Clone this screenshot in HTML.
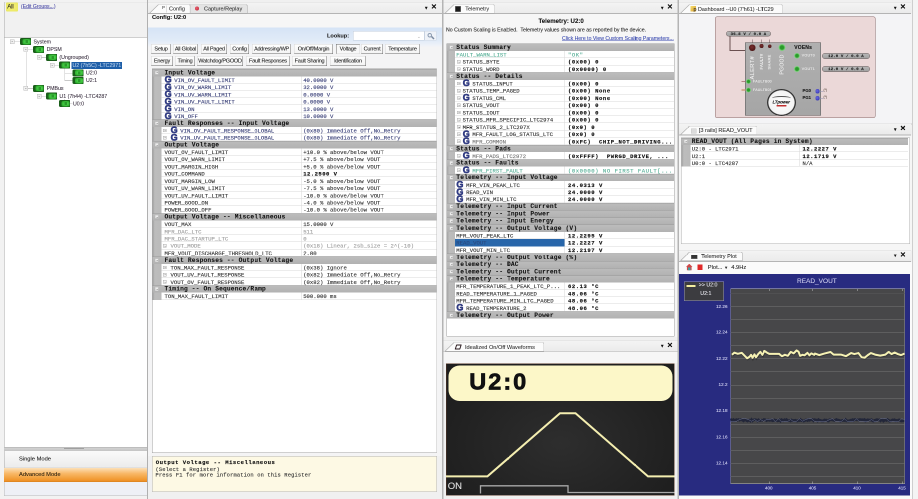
<!DOCTYPE html>
<html><head><meta charset="utf-8"><style>
*{margin:0;padding:0;box-sizing:border-box}
html,body{width:918px;height:499px;overflow:hidden;background:#f0f0f0}
#root{position:absolute;left:0;top:0;width:1836px;height:998px;will-change:transform;transform:scale(0.5);transform-origin:0 0;background:#eeeeee;font-family:"Liberation Sans",sans-serif;color:#000}
#root div,#root svg{position:absolute}
.t{white-space:nowrap;font-size:11px;line-height:14px}
.m{white-space:nowrap;font-family:"Liberation Mono",monospace;font-size:11px;line-height:14px;-webkit-text-stroke:0.25px currentColor}
.t{-webkit-text-stroke:0.15px currentColor}
.g{font-family:"Liberation Sans",sans-serif;font-weight:bold;color:#34408c;font-size:18px;line-height:15px;white-space:nowrap;-webkit-text-stroke:1.1px #2a3478}
</style></head>
<body><div id="root">
<div style="left:0px;top:0px;width:296px;height:998px;background:#f2f2f2;"></div>
<div style="left:8px;top:4px;width:288px;height:70px;background:#f1f1f1;border-left:1px solid #a8a8a8;border-top:1px solid #e4e4e4;"></div>
<div style="left:12px;top:5px;width:24px;height:18px;background:radial-gradient(ellipse at 50% 50%,#f8f078,#e8e860);border-radius:2px;"></div>
<div class="t" style="left:14.6px;top:6px;font-size:12px;color:#222;letter-spacing:-0.3px;">All</div>
<div class="t" style="left:42px;top:5.6px;color:#4a4aa8;text-decoration:underline;font-size:10.2px;">(Edit Groups...)</div>
<div style="left:8px;top:74px;width:288px;height:821px;background:#fff;border:1px solid #a8a8a8;border-top:1.5px solid #a0a0a0;"></div>
<div style="left:52px;top:104px;width:1.2px;height:72px;background:#c8c8c8;"></div>
<div style="left:129px;top:137px;width:1.2px;height:24px;background:#c8c8c8;"></div>
<div style="left:129px;top:160.4px;width:16px;height:1.2px;background:#c8c8c8;"></div>
<div style="left:129px;top:145.6px;width:16px;height:1.2px;background:#c8c8c8;"></div>
<div style="left:129px;top:198px;width:1.2px;height:9px;background:#c8c8c8;"></div>
<div style="left:129px;top:207px;width:16px;height:1.2px;background:#c8c8c8;"></div>
<div style="left:20.4px;top:78.8px;width:9px;height:9px;border:1px solid #bcbcbc;background:#f0f0f0;"><div style="left:2px;top:3px;width:3px;height:1px;background:#888"></div></div>
<div style="left:29.4px;top:83.2px;width:10.2px;height:1.2px;background:#c8c8c8;"></div>
<div style="left:39.6px;top:76.4px;width:22px;height:14px;background:#1a5e1a;border-radius:3px 1px 1px 3px;"><div style="left:5px;top:1.5px;width:16px;height:11px;background:radial-gradient(ellipse at 55% 50%,#5ae05a,#30b030 70%,#1f801f);border-radius:3px"></div><div style="left:11px;top:4px;width:5px;height:6px;background:#2a9a2a;border-radius:1px"></div></div>
<div class="t" style="left:67px;top:75.8px;font-size:10.5px;color:#3a3040;">System</div>
<div style="left:47.2px;top:94.4px;width:9px;height:9px;border:1px solid #bcbcbc;background:#f0f0f0;"><div style="left:2px;top:3px;width:3px;height:1px;background:#888"></div></div>
<div style="left:56.2px;top:98.8px;width:9.4px;height:1.2px;background:#c8c8c8;"></div>
<div style="left:65.6px;top:92px;width:22px;height:14px;background:#1a5e1a;border-radius:3px 1px 1px 3px;"><div style="left:5px;top:1.5px;width:16px;height:11px;background:radial-gradient(ellipse at 55% 50%,#5ae05a,#30b030 70%,#1f801f);border-radius:3px"></div><div style="left:11px;top:4px;width:5px;height:6px;background:#2a9a2a;border-radius:1px"></div></div>
<div class="t" style="left:93.2px;top:91.4px;font-size:10.5px;color:#3a3040;">DPSM</div>
<div style="left:74px;top:110px;width:9px;height:9px;border:1px solid #bcbcbc;background:#f0f0f0;"><div style="left:2px;top:3px;width:3px;height:1px;background:#888"></div></div>
<div style="left:83px;top:114.4px;width:9px;height:1.2px;background:#c8c8c8;"></div>
<div style="left:92px;top:107.6px;width:22px;height:14px;background:#1a5e1a;border-radius:3px 1px 1px 3px;"><div style="left:5px;top:1.5px;width:16px;height:11px;background:radial-gradient(ellipse at 55% 50%,#5ae05a,#30b030 70%,#1f801f);border-radius:3px"></div><div style="left:11px;top:4px;width:5px;height:6px;background:#2a9a2a;border-radius:1px"></div></div>
<div class="t" style="left:118.8px;top:107px;font-size:10.5px;color:#3a3040;">(Ungrouped)</div>
<div style="left:100px;top:125.6px;width:9px;height:9px;border:1px solid #bcbcbc;background:#f0f0f0;"><div style="left:2px;top:3px;width:3px;height:1px;background:#888"></div></div>
<div style="left:109px;top:130px;width:9.4px;height:1.2px;background:#c8c8c8;"></div>
<div style="left:118.4px;top:123.2px;width:22px;height:14px;background:#1a5e1a;border-radius:3px 1px 1px 3px;"><div style="left:5px;top:1.5px;width:16px;height:11px;background:radial-gradient(ellipse at 55% 50%,#5ae05a,#30b030 70%,#1f801f);border-radius:3px"></div><div style="left:11px;top:4px;width:5px;height:6px;background:#2a9a2a;border-radius:1px"></div></div>
<div style="left:143.2px;top:124.4px;width:101px;height:13.2px;background:#1f5fa8;"></div>
<div class="t" style="left:145px;top:122.6px;font-size:10.5px;color:#b8d0ec;">U2 (7h5C) -LTC2971</div>
<div style="left:145px;top:138.8px;width:22px;height:14px;background:#1a5e1a;border-radius:3px 1px 1px 3px;"><div style="left:5px;top:1.5px;width:16px;height:11px;background:radial-gradient(ellipse at 55% 50%,#5ae05a,#30b030 70%,#1f801f);border-radius:3px"></div><div style="left:11px;top:4px;width:5px;height:6px;background:#2a9a2a;border-radius:1px"></div></div>
<div class="t" style="left:172px;top:138.2px;font-size:10.5px;color:#3a3040;">U2:0</div>
<div style="left:145px;top:154px;width:22px;height:14px;background:#1a5e1a;border-radius:3px 1px 1px 3px;"><div style="left:5px;top:1.5px;width:16px;height:11px;background:radial-gradient(ellipse at 55% 50%,#5ae05a,#30b030 70%,#1f801f);border-radius:3px"></div><div style="left:11px;top:4px;width:5px;height:6px;background:#2a9a2a;border-radius:1px"></div></div>
<div class="t" style="left:172px;top:153.4px;font-size:10.5px;color:#3a3040;">U2:1</div>
<div style="left:47.2px;top:172px;width:9px;height:9px;border:1px solid #bcbcbc;background:#f0f0f0;"><div style="left:2px;top:3px;width:3px;height:1px;background:#888"></div></div>
<div style="left:56.2px;top:176.4px;width:9.4px;height:1.2px;background:#c8c8c8;"></div>
<div style="left:65.6px;top:169.6px;width:22px;height:14px;background:#1a5e1a;border-radius:3px 1px 1px 3px;"><div style="left:5px;top:1.5px;width:16px;height:11px;background:radial-gradient(ellipse at 55% 50%,#5ae05a,#30b030 70%,#1f801f);border-radius:3px"></div><div style="left:11px;top:4px;width:5px;height:6px;background:#2a9a2a;border-radius:1px"></div></div>
<div class="t" style="left:93.2px;top:169px;font-size:10.5px;color:#3a3040;">PMBus</div>
<div style="left:74px;top:187.6px;width:9px;height:9px;border:1px solid #bcbcbc;background:#f0f0f0;"><div style="left:2px;top:3px;width:3px;height:1px;background:#888"></div></div>
<div style="left:83px;top:192px;width:9px;height:1.2px;background:#c8c8c8;"></div>
<div style="left:92px;top:185.2px;width:22px;height:14px;background:#1a5e1a;border-radius:3px 1px 1px 3px;"><div style="left:5px;top:1.5px;width:16px;height:11px;background:radial-gradient(ellipse at 55% 50%,#5ae05a,#30b030 70%,#1f801f);border-radius:3px"></div><div style="left:11px;top:4px;width:5px;height:6px;background:#2a9a2a;border-radius:1px"></div></div>
<div class="t" style="left:118.8px;top:184.6px;font-size:10.5px;color:#3a3040;">U1 (7h44) -LTC4287</div>
<div style="left:118.4px;top:200.4px;width:22px;height:14px;background:#1a5e1a;border-radius:3px 1px 1px 3px;"><div style="left:5px;top:1.5px;width:16px;height:11px;background:radial-gradient(ellipse at 55% 50%,#5ae05a,#30b030 70%,#1f801f);border-radius:3px"></div><div style="left:11px;top:4px;width:5px;height:6px;background:#2a9a2a;border-radius:1px"></div></div>
<div class="t" style="left:146px;top:199.8px;font-size:10.5px;color:#3a3040;">U0:0</div>
<div style="left:8px;top:895px;width:288px;height:7px;background:linear-gradient(#d4d4d4,#c4c4c4);"><div style="left:120px;top:1px;width:40px;height:2px;background:#a0a0a0"></div></div>
<div style="left:8px;top:902px;width:288px;height:34px;background:linear-gradient(#fafafa,#ececec);border-left:1px solid #a8a8a8;border-right:1px solid #a8a8a8;border-bottom:1px solid #d4d4d4;"></div>
<div class="t" style="left:38px;top:910px;font-size:11.5px;color:#1a1a1a;">Single Mode</div>
<div style="left:8px;top:936px;width:288px;height:28px;background:linear-gradient(#fde0b8,#f8b866 40%,#f09428 90%,#d88020);"></div>
<div class="t" style="left:38px;top:941.2px;font-size:11.5px;color:#2a2010;">Advanced Mode</div>
<div style="left:8px;top:964px;width:288px;height:28px;background:#eef0f6;border:1px solid #b8b8b8;border-top:none;"></div>
<div style="left:296px;top:0px;width:590px;height:998px;background:#f0f0f0;"></div>
<div style="left:294.4px;top:0px;width:2px;height:998px;background:#b0b0b0;"></div>
<div style="left:296px;top:4.4px;width:588px;height:22px;background:linear-gradient(#f4f4f4,#ebebeb);border-top:1px solid #dcdcdc;"></div>
<div style="left:296px;top:26.4px;width:588px;height:1.6px;background:#b4b4b4;"></div>
<svg style="left:299px;top:8.8px" width="81.4" height="18.6"><polygon points="0,17.6 18,0 79.4,0 81.4,2 81.4,17.6" fill="#fbfbfb" stroke="#a8a8a8" stroke-width="1.2"/></svg>
<svg style="left:380.4px;top:8.8px" width="114.6" height="18.6"><polygon points="0,17.6 0,0 112.6,0 114.6,2 114.6,17.6" fill="#e4e4e4" stroke="#a8a8a8" stroke-width="1.2"/></svg>
<div class="t" style="left:848px;top:8.8px;font-size:9px;line-height:14px;color:#111;">&#9660;</div>
<div class="t" style="left:862px;top:6.4px;font-size:13.5px;line-height:16px;color:#111;font-weight:bold;">&#10005;</div>
<div class="t" style="left:324px;top:8.4px;color:#555;font-size:9px;">P</div>
<div style="left:333px;top:11px;width:1.2px;height:14px;background:#c0c0c0;"></div>
<div class="t" style="left:338px;top:10.4px;color:#333;font-size:11px;">Config</div>
<div style="left:390px;top:13px;width:8.4px;height:8.4px;background:radial-gradient(circle at 40% 40%,#f06070,#b02030);border-radius:50%;"></div>
<div class="t" style="left:408px;top:10.4px;color:#333;font-size:11px;">Capture/Replay</div>
<div style="left:296px;top:28px;width:588px;height:28px;background:#f6f6f6;"></div>
<div style="left:296px;top:92px;width:588px;height:820px;background:#f4f4f5;"></div>
<div class="t" style="left:304px;top:27.2px;font-weight:bold;font-size:11.5px;color:#111;">Config: U2:0</div>
<div style="left:296px;top:55px;width:588px;height:38px;background:linear-gradient(#d6e4f6,#e2ecf8 70%,#f2f4f8);"></div>
<div class="t" style="left:654px;top:64px;font-weight:bold;font-size:11.2px;color:#222;">Lookup:</div>
<div style="left:706px;top:62px;width:143px;height:19px;background:#fff;border:1px solid #c0ccdc;"><div style="right:6px;top:5px;font-size:9px;color:#aaa;line-height:10px">&#8964;</div></div>
<div style="left:849px;top:62px;width:24px;height:19px;background:#eef2f8;border:1px solid #d0d8e4;"><div style="left:5px;top:3px;width:9px;height:9px;border:2px solid #8a9ab0;border-radius:50%"></div><div style="left:12px;top:11px;width:7px;height:3px;background:#7a8aa0;transform:rotate(45deg)"></div></div>
<div style="left:302px;top:88px;width:40px;height:20px;background:linear-gradient(#fefefe,#f4f4f4);border:1px solid #d8d8d8;border-right:1.5px solid #6a6a6a;border-bottom:1.5px solid #6a6a6a;"><div class="t" style="left:-10px;right:-10px;top:0.5px;text-align:center;font-size:11px;color:#222;letter-spacing:-0.45px">Setup</div></div>
<div style="left:346px;top:88px;width:50px;height:20px;background:linear-gradient(#fefefe,#f4f4f4);border:1px solid #d8d8d8;border-right:1.5px solid #6a6a6a;border-bottom:1.5px solid #6a6a6a;"><div class="t" style="left:-10px;right:-10px;top:0.5px;text-align:center;font-size:11px;color:#222;letter-spacing:-0.45px">All Global</div></div>
<div style="left:402px;top:88px;width:52px;height:20px;background:linear-gradient(#fefefe,#f4f4f4);border:1px solid #d8d8d8;border-right:1.5px solid #6a6a6a;border-bottom:1.5px solid #6a6a6a;"><div class="t" style="left:-10px;right:-10px;top:0.5px;text-align:center;font-size:11px;color:#222;letter-spacing:-0.45px">All Paged</div></div>
<div style="left:460px;top:88px;width:38px;height:20px;background:linear-gradient(#fefefe,#f4f4f4);border:1px solid #d8d8d8;border-right:1.5px solid #6a6a6a;border-bottom:1.5px solid #6a6a6a;"><div class="t" style="left:-10px;right:-10px;top:0.5px;text-align:center;font-size:11px;color:#222;letter-spacing:-0.45px">Config</div></div>
<div style="left:504px;top:88px;width:78px;height:20px;background:linear-gradient(#fefefe,#f4f4f4);border:1px solid #d8d8d8;border-right:1.5px solid #6a6a6a;border-bottom:1.5px solid #6a6a6a;"><div class="t" style="left:-10px;right:-10px;top:0.5px;text-align:center;font-size:11px;color:#222;letter-spacing:-0.45px">Addressing/WP</div></div>
<div style="left:588px;top:88px;width:78px;height:20px;background:linear-gradient(#fefefe,#f4f4f4);border:1px solid #d8d8d8;border-right:1.5px solid #6a6a6a;border-bottom:1.5px solid #6a6a6a;"><div class="t" style="left:-10px;right:-10px;top:0.5px;text-align:center;font-size:11px;color:#222;letter-spacing:-0.45px">On/Off/Margin</div></div>
<div style="left:672px;top:88px;width:48px;height:20px;background:#f8f8f8;border:1px solid #d8d8d8;border-top:1.5px solid #6a6a6a;border-left:1.5px solid #6a6a6a;"><div class="t" style="left:-10px;right:-10px;top:0.5px;text-align:center;font-size:11px;color:#222;letter-spacing:-0.45px">Voltage</div></div>
<div style="left:722px;top:88px;width:44px;height:20px;background:linear-gradient(#fefefe,#f4f4f4);border:1px solid #d8d8d8;border-right:1.5px solid #6a6a6a;border-bottom:1.5px solid #6a6a6a;"><div class="t" style="left:-10px;right:-10px;top:0.5px;text-align:center;font-size:11px;color:#222;letter-spacing:-0.45px">Current</div></div>
<div style="left:770px;top:88px;width:70px;height:20px;background:linear-gradient(#fefefe,#f4f4f4);border:1px solid #d8d8d8;border-right:1.5px solid #6a6a6a;border-bottom:1.5px solid #6a6a6a;"><div class="t" style="left:-10px;right:-10px;top:0.5px;text-align:center;font-size:11px;color:#222;letter-spacing:-0.45px">Temperature</div></div>
<div style="left:302px;top:112px;width:44px;height:20px;background:linear-gradient(#fefefe,#f4f4f4);border:1px solid #d8d8d8;border-right:1.5px solid #6a6a6a;border-bottom:1.5px solid #6a6a6a;"><div class="t" style="left:-10px;right:-10px;top:0.5px;text-align:center;font-size:11px;color:#222;letter-spacing:-0.45px">Energy</div></div>
<div style="left:350px;top:112px;width:40px;height:20px;background:linear-gradient(#fefefe,#f4f4f4);border:1px solid #d8d8d8;border-right:1.5px solid #6a6a6a;border-bottom:1.5px solid #6a6a6a;"><div class="t" style="left:-10px;right:-10px;top:0.5px;text-align:center;font-size:11px;color:#222;letter-spacing:-0.45px">Timing</div></div>
<div style="left:394px;top:112px;width:92px;height:20px;background:linear-gradient(#fefefe,#f4f4f4);border:1px solid #d8d8d8;border-right:1.5px solid #6a6a6a;border-bottom:1.5px solid #6a6a6a;"><div class="t" style="left:-10px;right:-10px;top:0.5px;text-align:center;font-size:11px;color:#222;letter-spacing:-0.45px">Watchdog/PGOOD</div></div>
<div style="left:492px;top:112px;width:88px;height:20px;background:linear-gradient(#fefefe,#f4f4f4);border:1px solid #d8d8d8;border-right:1.5px solid #6a6a6a;border-bottom:1.5px solid #6a6a6a;"><div class="t" style="left:-10px;right:-10px;top:0.5px;text-align:center;font-size:11px;color:#222;letter-spacing:-0.45px">Fault Responses</div></div>
<div style="left:584px;top:112px;width:70px;height:20px;background:linear-gradient(#fefefe,#f4f4f4);border:1px solid #d8d8d8;border-right:1.5px solid #6a6a6a;border-bottom:1.5px solid #6a6a6a;"><div class="t" style="left:-10px;right:-10px;top:0.5px;text-align:center;font-size:11px;color:#222;letter-spacing:-0.45px">Fault Sharing</div></div>
<div style="left:660px;top:112px;width:72px;height:20px;background:linear-gradient(#fefefe,#f4f4f4);border:1px solid #d8d8d8;border-right:1.5px solid #6a6a6a;border-bottom:1.5px solid #6a6a6a;"><div class="t" style="left:-10px;right:-10px;top:0.5px;text-align:center;font-size:11px;color:#222;letter-spacing:-0.45px">Identification</div></div>
<div style="left:304px;top:137px;width:570px;height:769px;background:#fff;border:1px solid #a0a0a0;"></div>
<div style="left:305px;top:138.2px;width:18px;height:461.44px;background:linear-gradient(90deg,#aaaaaa 0,#aaaaaa 12%,#bdbdbd 25%,#bababa);"></div>
<div style="left:305px;top:138.2px;width:568px;height:14.42px;background:linear-gradient(#bcbcbc,#b2b2b2);border-top:1px solid #9a9a9a;"></div>
<div style="left:310px;top:141.8px;width:7.2px;height:7.2px;background:#ececec;border:1px solid #c8c8c8;"><div style="left:1.5px;top:2.5px;width:3px;height:1px;background:#777"></div></div>
<div class="m" style="left:329px;top:138.8px;font-weight:bold;font-size:12.5px;color:#111;letter-spacing:0.3px;-webkit-text-stroke:0.12px #111;">Input Voltage</div>
<div style="left:323px;top:152.62px;width:550px;height:14.42px;border-bottom:1px solid #dadada;"></div>
<div style="left:601.6px;top:152.62px;width:1px;height:14.42px;background:#d8d8d8;"></div>
<div class="g" style="left:329.2px;top:152.42px;">G</div>
<div class="m" style="left:348.6px;top:153.82px;color:#3a4078;font-size:11.2px;">VIN_OV_FAULT_LIMIT</div>
<div class="m" style="left:606.4px;top:153.82px;color:#3a4078;font-size:11.2px;">40.0000 V</div>
<div style="left:323px;top:167.04px;width:550px;height:14.42px;border-bottom:1px solid #dadada;"></div>
<div style="left:601.6px;top:167.04px;width:1px;height:14.42px;background:#d8d8d8;"></div>
<div class="g" style="left:329.2px;top:166.84px;">G</div>
<div class="m" style="left:348.6px;top:168.24px;color:#3a4078;font-size:11.2px;">VIN_OV_WARN_LIMIT</div>
<div class="m" style="left:606.4px;top:168.24px;color:#3a4078;font-size:11.2px;">32.0000 V</div>
<div style="left:323px;top:181.46px;width:550px;height:14.42px;border-bottom:1px solid #dadada;"></div>
<div style="left:601.6px;top:181.46px;width:1px;height:14.42px;background:#d8d8d8;"></div>
<div class="g" style="left:329.2px;top:181.26px;">G</div>
<div class="m" style="left:348.6px;top:182.66px;color:#3a4078;font-size:11.2px;">VIN_UV_WARN_LIMIT</div>
<div class="m" style="left:606.4px;top:182.66px;color:#3a4078;font-size:11.2px;">0.0000 V</div>
<div style="left:323px;top:195.88px;width:550px;height:14.42px;border-bottom:1px solid #dadada;"></div>
<div style="left:601.6px;top:195.88px;width:1px;height:14.42px;background:#d8d8d8;"></div>
<div class="g" style="left:329.2px;top:195.68px;">G</div>
<div class="m" style="left:348.6px;top:197.08px;color:#3a4078;font-size:11.2px;">VIN_UV_FAULT_LIMIT</div>
<div class="m" style="left:606.4px;top:197.08px;color:#3a4078;font-size:11.2px;">0.0000 V</div>
<div style="left:323px;top:210.3px;width:550px;height:14.42px;border-bottom:1px solid #dadada;"></div>
<div style="left:601.6px;top:210.3px;width:1px;height:14.42px;background:#d8d8d8;"></div>
<div class="g" style="left:329.2px;top:210.1px;">G</div>
<div class="m" style="left:348.6px;top:211.5px;color:#3a4078;font-size:11.2px;">VIN_ON</div>
<div class="m" style="left:606.4px;top:211.5px;color:#3a4078;font-size:11.2px;">13.0000 V</div>
<div style="left:323px;top:224.72px;width:550px;height:14.42px;border-bottom:1px solid #dadada;"></div>
<div style="left:601.6px;top:224.72px;width:1px;height:14.42px;background:#d8d8d8;"></div>
<div class="g" style="left:329.2px;top:224.52px;">G</div>
<div class="m" style="left:348.6px;top:225.92px;color:#3a4078;font-size:11.2px;">VIN_OFF</div>
<div class="m" style="left:606.4px;top:225.92px;color:#3a4078;font-size:11.2px;">10.0000 V</div>
<div style="left:305px;top:239.14px;width:568px;height:14.42px;background:linear-gradient(#bcbcbc,#b2b2b2);border-top:1px solid #9a9a9a;"></div>
<div style="left:310px;top:242.74px;width:7.2px;height:7.2px;background:#ececec;border:1px solid #c8c8c8;"><div style="left:1.5px;top:2.5px;width:3px;height:1px;background:#777"></div></div>
<div class="m" style="left:329px;top:239.74px;font-weight:bold;font-size:12.5px;color:#111;letter-spacing:0.3px;-webkit-text-stroke:0.12px #111;">Fault Responses -- Input Voltage</div>
<div style="left:323px;top:253.56px;width:550px;height:14.42px;border-bottom:1px solid #dadada;"></div>
<div style="left:601.6px;top:253.56px;width:1px;height:14.42px;background:#d8d8d8;"></div>
<div style="left:326px;top:257.56px;width:6.8px;height:6.8px;border:1px solid #b0b0b0;background:#f2f2f2;"><div style="left:1.5px;top:2.5px;width:3px;height:1px;background:#999"></div></div>
<div class="g" style="left:341.2px;top:253.36px;">G</div>
<div class="m" style="left:360.6px;top:254.76px;color:#3a4078;font-size:11.2px;">VIN_OV_FAULT_RESPONSE_GLOBAL</div>
<div class="m" style="left:606.4px;top:254.76px;color:#3a4078;font-size:11.2px;">(0x80) Immediate Off,No_Retry</div>
<div style="left:323px;top:267.98px;width:550px;height:14.42px;border-bottom:1px solid #dadada;"></div>
<div style="left:601.6px;top:267.98px;width:1px;height:14.42px;background:#d8d8d8;"></div>
<div style="left:326px;top:271.98px;width:6.8px;height:6.8px;border:1px solid #b0b0b0;background:#f2f2f2;"><div style="left:1.5px;top:2.5px;width:3px;height:1px;background:#999"></div></div>
<div class="g" style="left:341.2px;top:267.78px;">G</div>
<div class="m" style="left:360.6px;top:269.18px;color:#3a4078;font-size:11.2px;">VIN_UV_FAULT_RESPONSE_GLOBAL</div>
<div class="m" style="left:606.4px;top:269.18px;color:#3a4078;font-size:11.2px;">(0x80) Immediate Off,No_Retry</div>
<div style="left:305px;top:282.4px;width:568px;height:14.42px;background:linear-gradient(#bcbcbc,#b2b2b2);border-top:1px solid #9a9a9a;"></div>
<div style="left:310px;top:286px;width:7.2px;height:7.2px;background:#ececec;border:1px solid #c8c8c8;"><div style="left:1.5px;top:2.5px;width:3px;height:1px;background:#777"></div></div>
<div class="m" style="left:329px;top:283px;font-weight:bold;font-size:12.5px;color:#111;letter-spacing:0.3px;-webkit-text-stroke:0.12px #111;">Output Voltage</div>
<div style="left:323px;top:296.82px;width:550px;height:14.42px;border-bottom:1px solid #dadada;"></div>
<div style="left:601.6px;top:296.82px;width:1px;height:14.42px;background:#d8d8d8;"></div>
<div class="m" style="left:329px;top:298.02px;color:#333;font-size:11.2px;">VOUT_OV_FAULT_LIMIT</div>
<div class="m" style="left:606.4px;top:298.02px;color:#333;font-size:11.2px;">+10.0 % above/below VOUT</div>
<div style="left:323px;top:311.24px;width:550px;height:14.42px;border-bottom:1px solid #dadada;"></div>
<div style="left:601.6px;top:311.24px;width:1px;height:14.42px;background:#d8d8d8;"></div>
<div class="m" style="left:329px;top:312.44px;color:#333;font-size:11.2px;">VOUT_OV_WARN_LIMIT</div>
<div class="m" style="left:606.4px;top:312.44px;color:#333;font-size:11.2px;">+7.5 % above/below VOUT</div>
<div style="left:323px;top:325.66px;width:550px;height:14.42px;border-bottom:1px solid #dadada;"></div>
<div style="left:601.6px;top:325.66px;width:1px;height:14.42px;background:#d8d8d8;"></div>
<div class="m" style="left:329px;top:326.86px;color:#333;font-size:11.2px;">VOUT_MARGIN_HIGH</div>
<div class="m" style="left:606.4px;top:326.86px;color:#333;font-size:11.2px;">+5.0 % above/below VOUT</div>
<div style="left:323px;top:340.08px;width:550px;height:14.42px;border-bottom:1px solid #dadada;"></div>
<div style="left:601.6px;top:340.08px;width:1px;height:14.42px;background:#d8d8d8;"></div>
<div class="m" style="left:329px;top:341.28px;color:#333;font-size:11.2px;">VOUT_COMMAND</div>
<div class="m" style="left:606.4px;top:341.28px;color:#111;font-weight:bold;font-size:11.2px;letter-spacing:0.9px;">12.2500 V</div>
<div style="left:323px;top:354.5px;width:550px;height:14.42px;border-bottom:1px solid #dadada;"></div>
<div style="left:601.6px;top:354.5px;width:1px;height:14.42px;background:#d8d8d8;"></div>
<div class="m" style="left:329px;top:355.7px;color:#333;font-size:11.2px;">VOUT_MARGIN_LOW</div>
<div class="m" style="left:606.4px;top:355.7px;color:#333;font-size:11.2px;">-5.0 % above/below VOUT</div>
<div style="left:323px;top:368.92px;width:550px;height:14.42px;border-bottom:1px solid #dadada;"></div>
<div style="left:601.6px;top:368.92px;width:1px;height:14.42px;background:#d8d8d8;"></div>
<div class="m" style="left:329px;top:370.12px;color:#333;font-size:11.2px;">VOUT_UV_WARN_LIMIT</div>
<div class="m" style="left:606.4px;top:370.12px;color:#333;font-size:11.2px;">-7.5 % above/below VOUT</div>
<div style="left:323px;top:383.34px;width:550px;height:14.42px;border-bottom:1px solid #dadada;"></div>
<div style="left:601.6px;top:383.34px;width:1px;height:14.42px;background:#d8d8d8;"></div>
<div class="m" style="left:329px;top:384.54px;color:#333;font-size:11.2px;">VOUT_UV_FAULT_LIMIT</div>
<div class="m" style="left:606.4px;top:384.54px;color:#333;font-size:11.2px;">-10.0 % above/below VOUT</div>
<div style="left:323px;top:397.76px;width:550px;height:14.42px;border-bottom:1px solid #dadada;"></div>
<div style="left:601.6px;top:397.76px;width:1px;height:14.42px;background:#d8d8d8;"></div>
<div class="m" style="left:329px;top:398.96px;color:#333;font-size:11.2px;">POWER_GOOD_ON</div>
<div class="m" style="left:606.4px;top:398.96px;color:#333;font-size:11.2px;">-4.0 % above/below VOUT</div>
<div style="left:323px;top:412.18px;width:550px;height:14.42px;border-bottom:1px solid #dadada;"></div>
<div style="left:601.6px;top:412.18px;width:1px;height:14.42px;background:#d8d8d8;"></div>
<div class="m" style="left:329px;top:413.38px;color:#333;font-size:11.2px;">POWER_GOOD_OFF</div>
<div class="m" style="left:606.4px;top:413.38px;color:#333;font-size:11.2px;">-10.0 % above/below VOUT</div>
<div style="left:305px;top:426.6px;width:568px;height:14.42px;background:linear-gradient(#bcbcbc,#b2b2b2);border-top:1px solid #9a9a9a;"></div>
<div style="left:310px;top:430.2px;width:7.2px;height:7.2px;background:#ececec;border:1px solid #c8c8c8;"><div style="left:1.5px;top:2.5px;width:3px;height:1px;background:#777"></div></div>
<div class="m" style="left:329px;top:427.2px;font-weight:bold;font-size:12.5px;color:#111;letter-spacing:0.3px;-webkit-text-stroke:0.12px #111;">Output Voltage -- Miscellaneous</div>
<div style="left:323px;top:441.02px;width:550px;height:14.42px;border-bottom:1px solid #dadada;"></div>
<div style="left:601.6px;top:441.02px;width:1px;height:14.42px;background:#d8d8d8;"></div>
<div class="m" style="left:329px;top:442.22px;color:#333;font-size:11.2px;">VOUT_MAX</div>
<div class="m" style="left:606.4px;top:442.22px;color:#333;font-size:11.2px;">15.0000 V</div>
<div style="left:323px;top:455.44px;width:550px;height:14.42px;border-bottom:1px solid #dadada;"></div>
<div style="left:601.6px;top:455.44px;width:1px;height:14.42px;background:#d8d8d8;"></div>
<div class="m" style="left:329px;top:456.64px;color:#a0a0a0;font-size:11.2px;">MFR_DAC_LTC</div>
<div class="m" style="left:606.4px;top:456.64px;color:#a0a0a0;font-size:11.2px;">511</div>
<div style="left:323px;top:469.86px;width:550px;height:14.42px;border-bottom:1px solid #dadada;"></div>
<div style="left:601.6px;top:469.86px;width:1px;height:14.42px;background:#d8d8d8;"></div>
<div class="m" style="left:329px;top:471.06px;color:#a0a0a0;font-size:11.2px;">MFR_DAC_STARTUP_LTC</div>
<div class="m" style="left:606.4px;top:471.06px;color:#a0a0a0;font-size:11.2px;">0</div>
<div style="left:323px;top:484.28px;width:550px;height:14.42px;border-bottom:1px solid #dadada;"></div>
<div style="left:601.6px;top:484.28px;width:1px;height:14.42px;background:#d8d8d8;"></div>
<div style="left:326px;top:488.28px;width:6.8px;height:6.8px;border:1px solid #b0b0b0;background:#f2f2f2;"><div style="left:1.5px;top:2.5px;width:3px;height:1px;background:#999"></div></div>
<div class="m" style="left:341px;top:485.48px;color:#a0a0a0;font-size:11.2px;">VOUT_MODE</div>
<div class="m" style="left:606.4px;top:485.48px;color:#a0a0a0;font-size:11.2px;">(0x18) Linear, 2sb_size = 2^(-10)</div>
<div style="left:323px;top:498.7px;width:550px;height:14.42px;border-bottom:1px solid #dadada;"></div>
<div style="left:601.6px;top:498.7px;width:1px;height:14.42px;background:#d8d8d8;"></div>
<div class="m" style="left:329px;top:499.9px;color:#333;font-size:11.2px;">MFR_VOUT_DISCHARGE_THRESHOLD_LTC</div>
<div class="m" style="left:606.4px;top:499.9px;color:#333;font-size:11.2px;">2.00</div>
<div style="left:305px;top:513.12px;width:568px;height:14.42px;background:linear-gradient(#bcbcbc,#b2b2b2);border-top:1px solid #9a9a9a;"></div>
<div style="left:310px;top:516.72px;width:7.2px;height:7.2px;background:#ececec;border:1px solid #c8c8c8;"><div style="left:1.5px;top:2.5px;width:3px;height:1px;background:#777"></div></div>
<div class="m" style="left:329px;top:513.72px;font-weight:bold;font-size:12.5px;color:#111;letter-spacing:0.3px;-webkit-text-stroke:0.12px #111;">Fault Responses -- Output Voltage</div>
<div style="left:323px;top:527.54px;width:550px;height:14.42px;border-bottom:1px solid #dadada;"></div>
<div style="left:601.6px;top:527.54px;width:1px;height:14.42px;background:#d8d8d8;"></div>
<div style="left:326px;top:531.54px;width:6.8px;height:6.8px;border:1px solid #b0b0b0;background:#f2f2f2;"><div style="left:1.5px;top:2.5px;width:3px;height:1px;background:#999"></div></div>
<div class="m" style="left:341px;top:528.74px;color:#333;font-size:11.2px;">TON_MAX_FAULT_RESPONSE</div>
<div class="m" style="left:606.4px;top:528.74px;color:#333;font-size:11.2px;">(0x38) Ignore</div>
<div style="left:323px;top:541.96px;width:550px;height:14.42px;border-bottom:1px solid #dadada;"></div>
<div style="left:601.6px;top:541.96px;width:1px;height:14.42px;background:#d8d8d8;"></div>
<div style="left:326px;top:545.96px;width:6.8px;height:6.8px;border:1px solid #b0b0b0;background:#f2f2f2;"><div style="left:1.5px;top:2.5px;width:3px;height:1px;background:#999"></div></div>
<div class="m" style="left:341px;top:543.16px;color:#333;font-size:11.2px;">VOUT_UV_FAULT_RESPONSE</div>
<div class="m" style="left:606.4px;top:543.16px;color:#333;font-size:11.2px;">(0x82) Immediate Off,No_Retry</div>
<div style="left:323px;top:556.38px;width:550px;height:14.42px;border-bottom:1px solid #dadada;"></div>
<div style="left:601.6px;top:556.38px;width:1px;height:14.42px;background:#d8d8d8;"></div>
<div style="left:326px;top:560.38px;width:6.8px;height:6.8px;border:1px solid #b0b0b0;background:#f2f2f2;"><div style="left:1.5px;top:2.5px;width:3px;height:1px;background:#999"></div></div>
<div class="m" style="left:341px;top:557.58px;color:#333;font-size:11.2px;">VOUT_OV_FAULT_RESPONSE</div>
<div class="m" style="left:606.4px;top:557.58px;color:#333;font-size:11.2px;">(0x82) Immediate Off,No_Retry</div>
<div style="left:305px;top:570.8px;width:568px;height:14.42px;background:linear-gradient(#bcbcbc,#b2b2b2);border-top:1px solid #9a9a9a;"></div>
<div style="left:310px;top:574.4px;width:7.2px;height:7.2px;background:#ececec;border:1px solid #c8c8c8;"><div style="left:1.5px;top:2.5px;width:3px;height:1px;background:#777"></div></div>
<div class="m" style="left:329px;top:571.4px;font-weight:bold;font-size:12.5px;color:#111;letter-spacing:0.3px;-webkit-text-stroke:0.12px #111;">Timing -- On Sequence/Ramp</div>
<div style="left:323px;top:585.22px;width:550px;height:14.42px;border-bottom:1px solid #dadada;"></div>
<div style="left:601.6px;top:585.22px;width:1px;height:14.42px;background:#d8d8d8;"></div>
<div class="m" style="left:329px;top:586.42px;color:#333;font-size:11.2px;">TON_MAX_FAULT_LIMIT</div>
<div class="m" style="left:606.4px;top:586.42px;color:#333;font-size:11.2px;">500.000 ms</div>
<div style="left:873px;top:137px;width:1.2px;height:769px;background:#c0c0c0;"></div>
<div style="left:304px;top:912px;width:570px;height:72px;background:#fdf9e4;border:1px solid #b4b4b4;"></div>
<div class="m" style="left:311.6px;top:918px;font-weight:bold;font-size:11.2px;color:#111;letter-spacing:1px;">Output Voltage -- Miscellaneous</div>
<div class="m" style="left:311px;top:931.6px;font-size:10.8px;color:#333;letter-spacing:0.3px;">(Select a Register)</div>
<div class="m" style="left:311px;top:942.6px;font-size:10.8px;color:#333;letter-spacing:0.3px;">Press F1 for more information on this Register</div>
<div style="left:884px;top:0px;width:3px;height:998px;background:#b4b4b4;"></div>
<div style="left:887px;top:0px;width:470px;height:998px;background:#f0f0f0;"></div>
<div style="left:887px;top:28px;width:468px;height:646px;background:#f6f6f6;"></div>
<div style="left:887px;top:4.4px;width:469px;height:22px;background:linear-gradient(#f4f4f4,#ebebeb);border-top:1px solid #dcdcdc;"></div>
<div style="left:887px;top:26.4px;width:469px;height:1.6px;background:#b4b4b4;"></div>
<svg style="left:890px;top:8.8px" width="99" height="18.6"><polygon points="0,17.6 18,0 97,0 99,2 99,17.6" fill="#fbfbfb" stroke="#a8a8a8" stroke-width="1.2"/></svg>
<div class="t" style="left:1320px;top:8.8px;font-size:9px;line-height:14px;color:#111;">&#9660;</div>
<div class="t" style="left:1334px;top:6.4px;font-size:13.5px;line-height:16px;color:#111;font-weight:bold;">&#10005;</div>
<div style="left:910px;top:12px;width:12.4px;height:12.4px;background:#1a1a1a;border:1px solid #888;"></div>
<div class="t" style="left:930.6px;top:10.4px;color:#333;font-size:11px;">Telemetry</div>
<div class="t" style="left:1077px;top:34.6px;font-size:12.2px;font-weight:bold;color:#111;"><b>Telemetry:</b> U2:0</div>
<div class="t" style="left:892px;top:53.2px;font-size:10.4px;color:#222;">No Custom Scaling is Enabled.&nbsp; Telemetry values shown are as reported by the device.</div>
<div class="t" style="left:1124px;top:70px;font-size:10.3px;color:#3a4ab0;text-decoration:underline;">Click Here to View Custom Scaling Parameters...</div>
<div style="left:893px;top:87.2px;width:456px;height:586px;background:#fff;border:1px solid #a0a0a0;"></div>
<div style="left:894px;top:87.2px;width:16px;height:550.24px;background:linear-gradient(90deg,#aaaaaa 0,#aaaaaa 12%,#bdbdbd 25%,#bababa);"></div>
<div style="left:894px;top:87.2px;width:454px;height:14.48px;background:linear-gradient(#bcbcbc,#b2b2b2);border-top:1px solid #9a9a9a;"></div>
<div style="left:899px;top:90.8px;width:7.2px;height:7.2px;background:#ececec;border:1px solid #c8c8c8;"><div style="left:1.5px;top:2.5px;width:3px;height:1px;background:#777"></div></div>
<div class="m" style="left:912.6px;top:87.8px;font-weight:bold;font-size:12.5px;color:#111;letter-spacing:0.3px;-webkit-text-stroke:0.12px #111;">Status Summary</div>
<div style="left:910px;top:101.68px;width:438px;height:14.48px;border-bottom:1px solid #dadada;"></div>
<div style="left:1129.4px;top:101.68px;width:1px;height:14.48px;background:#d8d8d8;"></div>
<div class="m" style="left:912.6px;top:102.88px;color:#58b098;font-size:11.2px;">FAULT_WARN_LIST</div>
<div class="m" style="left:1136px;top:102.88px;color:#58b098;font-size:11.2px;letter-spacing:1.05px;">"OK"</div>
<div style="left:910px;top:116.16px;width:438px;height:14.48px;border-bottom:1px solid #dadada;"></div>
<div style="left:1129.4px;top:116.16px;width:1px;height:14.48px;background:#d8d8d8;"></div>
<div style="left:914px;top:120.16px;width:6.8px;height:6.8px;border:1px solid #b0b0b0;background:#f2f2f2;"><div style="left:1.5px;top:2.5px;width:3px;height:1px;background:#999"></div></div>
<div class="m" style="left:925.2px;top:117.36px;color:#333;font-size:11.2px;">STATUS_BYTE</div>
<div class="m" style="left:1136px;top:117.36px;color:#111;font-weight:bold;font-size:11.2px;letter-spacing:1.05px;">(0x00) 0</div>
<div style="left:910px;top:130.64px;width:438px;height:14.48px;border-bottom:1px solid #dadada;"></div>
<div style="left:1129.4px;top:130.64px;width:1px;height:14.48px;background:#d8d8d8;"></div>
<div style="left:914px;top:134.64px;width:6.8px;height:6.8px;border:1px solid #b0b0b0;background:#f2f2f2;"><div style="left:1.5px;top:2.5px;width:3px;height:1px;background:#999"></div></div>
<div class="m" style="left:925.2px;top:131.84px;color:#333;font-size:11.2px;">STATUS_WORD</div>
<div class="m" style="left:1136px;top:131.84px;color:#111;font-weight:bold;font-size:11.2px;letter-spacing:1.05px;">(0x0000) 0</div>
<div style="left:894px;top:145.12px;width:454px;height:14.48px;background:linear-gradient(#bcbcbc,#b2b2b2);border-top:1px solid #9a9a9a;"></div>
<div style="left:899px;top:148.72px;width:7.2px;height:7.2px;background:#ececec;border:1px solid #c8c8c8;"><div style="left:1.5px;top:2.5px;width:3px;height:1px;background:#777"></div></div>
<div class="m" style="left:912.6px;top:145.72px;font-weight:bold;font-size:12.5px;color:#111;letter-spacing:0.3px;-webkit-text-stroke:0.12px #111;">Status -- Details</div>
<div style="left:910px;top:159.6px;width:438px;height:14.48px;border-bottom:1px solid #dadada;"></div>
<div style="left:1129.4px;top:159.6px;width:1px;height:14.48px;background:#d8d8d8;"></div>
<div style="left:914px;top:163.6px;width:6.8px;height:6.8px;border:1px solid #b0b0b0;background:#f2f2f2;"><div style="left:1.5px;top:2.5px;width:3px;height:1px;background:#999"></div></div>
<div class="g" style="left:925.4px;top:159.4px;">G</div>
<div class="m" style="left:944.8px;top:160.8px;color:#333;font-size:11.2px;">STATUS_INPUT</div>
<div class="m" style="left:1136px;top:160.8px;color:#111;font-weight:bold;font-size:11.2px;letter-spacing:1.05px;">(0x00) 0</div>
<div style="left:910px;top:174.08px;width:438px;height:14.48px;border-bottom:1px solid #dadada;"></div>
<div style="left:1129.4px;top:174.08px;width:1px;height:14.48px;background:#d8d8d8;"></div>
<div style="left:914px;top:178.08px;width:6.8px;height:6.8px;border:1px solid #b0b0b0;background:#f2f2f2;"><div style="left:1.5px;top:2.5px;width:3px;height:1px;background:#999"></div></div>
<div class="m" style="left:925.2px;top:175.28px;color:#333;font-size:11.2px;">STATUS_TEMP_PAGED</div>
<div class="m" style="left:1136px;top:175.28px;color:#111;font-weight:bold;font-size:11.2px;letter-spacing:1.05px;">(0x00) None</div>
<div style="left:910px;top:188.56px;width:438px;height:14.48px;border-bottom:1px solid #dadada;"></div>
<div style="left:1129.4px;top:188.56px;width:1px;height:14.48px;background:#d8d8d8;"></div>
<div style="left:914px;top:192.56px;width:6.8px;height:6.8px;border:1px solid #b0b0b0;background:#f2f2f2;"><div style="left:1.5px;top:2.5px;width:3px;height:1px;background:#999"></div></div>
<div class="g" style="left:925.4px;top:188.36px;">G</div>
<div class="m" style="left:944.8px;top:189.76px;color:#333;font-size:11.2px;">STATUS_CML</div>
<div class="m" style="left:1136px;top:189.76px;color:#111;font-weight:bold;font-size:11.2px;letter-spacing:1.05px;">(0x00) None</div>
<div style="left:910px;top:203.04px;width:438px;height:14.48px;border-bottom:1px solid #dadada;"></div>
<div style="left:1129.4px;top:203.04px;width:1px;height:14.48px;background:#d8d8d8;"></div>
<div style="left:914px;top:207.04px;width:6.8px;height:6.8px;border:1px solid #b0b0b0;background:#f2f2f2;"><div style="left:1.5px;top:2.5px;width:3px;height:1px;background:#999"></div></div>
<div class="m" style="left:925.2px;top:204.24px;color:#333;font-size:11.2px;">STATUS_VOUT</div>
<div class="m" style="left:1136px;top:204.24px;color:#111;font-weight:bold;font-size:11.2px;letter-spacing:1.05px;">(0x00) 0</div>
<div style="left:910px;top:217.52px;width:438px;height:14.48px;border-bottom:1px solid #dadada;"></div>
<div style="left:1129.4px;top:217.52px;width:1px;height:14.48px;background:#d8d8d8;"></div>
<div style="left:914px;top:221.52px;width:6.8px;height:6.8px;border:1px solid #b0b0b0;background:#f2f2f2;"><div style="left:1.5px;top:2.5px;width:3px;height:1px;background:#999"></div></div>
<div class="m" style="left:925.2px;top:218.72px;color:#333;font-size:11.2px;">STATUS_IOUT</div>
<div class="m" style="left:1136px;top:218.72px;color:#111;font-weight:bold;font-size:11.2px;letter-spacing:1.05px;">(0x00) 0</div>
<div style="left:910px;top:232px;width:438px;height:14.48px;border-bottom:1px solid #dadada;"></div>
<div style="left:1129.4px;top:232px;width:1px;height:14.48px;background:#d8d8d8;"></div>
<div style="left:914px;top:236px;width:6.8px;height:6.8px;border:1px solid #b0b0b0;background:#f2f2f2;"><div style="left:1.5px;top:2.5px;width:3px;height:1px;background:#999"></div></div>
<div class="m" style="left:925.2px;top:233.2px;color:#333;font-size:11.2px;">STATUS_MFR_SPECIFIC_LTC2974</div>
<div class="m" style="left:1136px;top:233.2px;color:#111;font-weight:bold;font-size:11.2px;letter-spacing:1.05px;">(0x00) 0</div>
<div style="left:910px;top:246.48px;width:438px;height:14.48px;border-bottom:1px solid #dadada;"></div>
<div style="left:1129.4px;top:246.48px;width:1px;height:14.48px;background:#d8d8d8;"></div>
<div style="left:914px;top:250.48px;width:6.8px;height:6.8px;border:1px solid #b0b0b0;background:#f2f2f2;"><div style="left:1.5px;top:2.5px;width:3px;height:1px;background:#999"></div></div>
<div class="m" style="left:925.2px;top:247.68px;color:#333;font-size:11.2px;">MFR_STATUS_2_LTC297X</div>
<div class="m" style="left:1136px;top:247.68px;color:#111;font-weight:bold;font-size:11.2px;letter-spacing:1.05px;">(0x0) 0</div>
<div style="left:910px;top:260.96px;width:438px;height:14.48px;border-bottom:1px solid #dadada;"></div>
<div style="left:1129.4px;top:260.96px;width:1px;height:14.48px;background:#d8d8d8;"></div>
<div style="left:914px;top:264.96px;width:6.8px;height:6.8px;border:1px solid #b0b0b0;background:#f2f2f2;"><div style="left:1.5px;top:2.5px;width:3px;height:1px;background:#999"></div></div>
<div class="g" style="left:925.4px;top:260.76px;">G</div>
<div class="m" style="left:944.8px;top:262.16px;color:#333;font-size:11.2px;">MFR_FAULT_LOG_STATUS_LTC</div>
<div class="m" style="left:1136px;top:262.16px;color:#111;font-weight:bold;font-size:11.2px;letter-spacing:1.05px;">(0x0) 0</div>
<div style="left:910px;top:275.44px;width:438px;height:14.48px;border-bottom:1px solid #dadada;"></div>
<div style="left:1129.4px;top:275.44px;width:1px;height:14.48px;background:#d8d8d8;"></div>
<div style="left:914px;top:279.44px;width:6.8px;height:6.8px;border:1px solid #b0b0b0;background:#f2f2f2;"><div style="left:1.5px;top:2.5px;width:3px;height:1px;background:#999"></div></div>
<div class="g" style="left:925.4px;top:275.24px;">G</div>
<div class="m" style="left:944.8px;top:276.64px;color:#777;font-size:11.2px;">MFR_COMMON</div>
<div class="m" style="left:1136px;top:276.64px;color:#111;font-weight:bold;font-size:11.2px;letter-spacing:1.05px;">(0xFC)&nbsp; CHIP_NOT_DRIVING...</div>
<div style="left:894px;top:289.92px;width:454px;height:14.48px;background:linear-gradient(#bcbcbc,#b2b2b2);border-top:1px solid #9a9a9a;"></div>
<div style="left:899px;top:293.52px;width:7.2px;height:7.2px;background:#ececec;border:1px solid #c8c8c8;"><div style="left:1.5px;top:2.5px;width:3px;height:1px;background:#777"></div></div>
<div class="m" style="left:912.6px;top:290.52px;font-weight:bold;font-size:12.5px;color:#111;letter-spacing:0.3px;-webkit-text-stroke:0.12px #111;">Status -- Pads</div>
<div style="left:910px;top:304.4px;width:438px;height:14.48px;border-bottom:1px solid #dadada;"></div>
<div style="left:1129.4px;top:304.4px;width:1px;height:14.48px;background:#d8d8d8;"></div>
<div style="left:914px;top:308.4px;width:6.8px;height:6.8px;border:1px solid #b0b0b0;background:#f2f2f2;"><div style="left:1.5px;top:2.5px;width:3px;height:1px;background:#999"></div></div>
<div class="g" style="left:925.4px;top:304.2px;">G</div>
<div class="m" style="left:944.8px;top:305.6px;color:#777;font-size:11.2px;">MFR_PADS_LTC2972</div>
<div class="m" style="left:1136px;top:305.6px;color:#111;font-weight:bold;font-size:11.2px;letter-spacing:1.05px;">(0xFFFF)&nbsp; PWRGD_DRIVE, ...</div>
<div style="left:894px;top:318.88px;width:454px;height:14.48px;background:linear-gradient(#bcbcbc,#b2b2b2);border-top:1px solid #9a9a9a;"></div>
<div style="left:899px;top:322.48px;width:7.2px;height:7.2px;background:#ececec;border:1px solid #c8c8c8;"><div style="left:1.5px;top:2.5px;width:3px;height:1px;background:#777"></div></div>
<div class="m" style="left:912.6px;top:319.48px;font-weight:bold;font-size:12.5px;color:#111;letter-spacing:0.3px;-webkit-text-stroke:0.12px #111;">Status -- Faults</div>
<div style="left:910px;top:333.36px;width:438px;height:14.48px;border-bottom:1px solid #dadada;"></div>
<div style="left:1129.4px;top:333.36px;width:1px;height:14.48px;background:#d8d8d8;"></div>
<div style="left:914px;top:337.36px;width:6.8px;height:6.8px;border:1px solid #b0b0b0;background:#f2f2f2;"><div style="left:1.5px;top:2.5px;width:3px;height:1px;background:#999"></div></div>
<div class="g" style="left:925.4px;top:333.16px;">G</div>
<div class="m" style="left:944.8px;top:334.56px;color:#58b098;font-size:11.2px;">MFR_FIRST_FAULT</div>
<div class="m" style="left:1136px;top:334.56px;color:#58b098;font-size:11.2px;letter-spacing:1.05px;">(0x0000) NO FIRST FAULT[...</div>
<div style="left:894px;top:347.84px;width:454px;height:14.48px;background:linear-gradient(#bcbcbc,#b2b2b2);border-top:1px solid #9a9a9a;"></div>
<div style="left:899px;top:351.44px;width:7.2px;height:7.2px;background:#ececec;border:1px solid #c8c8c8;"><div style="left:1.5px;top:2.5px;width:3px;height:1px;background:#777"></div></div>
<div class="m" style="left:912.6px;top:348.44px;font-weight:bold;font-size:12.5px;color:#111;letter-spacing:0.3px;-webkit-text-stroke:0.12px #111;">Telemetry -- Input Voltage</div>
<div style="left:910px;top:362.32px;width:438px;height:14.48px;border-bottom:1px solid #dadada;"></div>
<div style="left:1129.4px;top:362.32px;width:1px;height:14.48px;background:#d8d8d8;"></div>
<div class="g" style="left:912.8px;top:362.12px;">G</div>
<div class="m" style="left:932.2px;top:363.52px;color:#333;font-size:11.2px;">MFR_VIN_PEAK_LTC</div>
<div class="m" style="left:1136px;top:363.52px;color:#111;font-weight:bold;font-size:11.2px;letter-spacing:1.05px;">24.0313 V</div>
<div style="left:910px;top:376.8px;width:438px;height:14.48px;border-bottom:1px solid #dadada;"></div>
<div style="left:1129.4px;top:376.8px;width:1px;height:14.48px;background:#d8d8d8;"></div>
<div class="g" style="left:912.8px;top:376.6px;">G</div>
<div class="m" style="left:932.2px;top:378px;color:#333;font-size:11.2px;">READ_VIN</div>
<div class="m" style="left:1136px;top:378px;color:#111;font-weight:bold;font-size:11.2px;letter-spacing:1.05px;">24.0000 V</div>
<div style="left:910px;top:391.28px;width:438px;height:14.48px;border-bottom:1px solid #dadada;"></div>
<div style="left:1129.4px;top:391.28px;width:1px;height:14.48px;background:#d8d8d8;"></div>
<div class="g" style="left:912.8px;top:391.08px;">G</div>
<div class="m" style="left:932.2px;top:392.48px;color:#333;font-size:11.2px;">MFR_VIN_MIN_LTC</div>
<div class="m" style="left:1136px;top:392.48px;color:#111;font-weight:bold;font-size:11.2px;letter-spacing:1.05px;">24.0000 V</div>
<div style="left:894px;top:405.76px;width:454px;height:14.48px;background:linear-gradient(#bcbcbc,#b2b2b2);border-top:1px solid #9a9a9a;"></div>
<div style="left:899px;top:409.36px;width:7.2px;height:7.2px;background:#ececec;border:1px solid #c8c8c8;"><div style="left:1.5px;top:2.5px;width:3px;height:1px;background:#777"></div></div>
<div class="m" style="left:912.6px;top:406.36px;font-weight:bold;font-size:12.5px;color:#111;letter-spacing:0.3px;-webkit-text-stroke:0.12px #111;">Telemetry -- Input Current</div>
<div style="left:894px;top:420.24px;width:454px;height:14.48px;background:linear-gradient(#bcbcbc,#b2b2b2);border-top:1px solid #9a9a9a;"></div>
<div style="left:899px;top:423.84px;width:7.2px;height:7.2px;background:#ececec;border:1px solid #c8c8c8;"><div style="left:1.5px;top:2.5px;width:3px;height:1px;background:#777"></div></div>
<div class="m" style="left:912.6px;top:420.84px;font-weight:bold;font-size:12.5px;color:#111;letter-spacing:0.3px;-webkit-text-stroke:0.12px #111;">Telemetry -- Input Power</div>
<div style="left:894px;top:434.72px;width:454px;height:14.48px;background:linear-gradient(#bcbcbc,#b2b2b2);border-top:1px solid #9a9a9a;"></div>
<div style="left:899px;top:438.32px;width:7.2px;height:7.2px;background:#ececec;border:1px solid #c8c8c8;"><div style="left:1.5px;top:2.5px;width:3px;height:1px;background:#777"></div></div>
<div class="m" style="left:912.6px;top:435.32px;font-weight:bold;font-size:12.5px;color:#111;letter-spacing:0.3px;-webkit-text-stroke:0.12px #111;">Telemetry -- Input Energy</div>
<div style="left:894px;top:449.2px;width:454px;height:14.48px;background:linear-gradient(#bcbcbc,#b2b2b2);border-top:1px solid #9a9a9a;"></div>
<div style="left:899px;top:452.8px;width:7.2px;height:7.2px;background:#ececec;border:1px solid #c8c8c8;"><div style="left:1.5px;top:2.5px;width:3px;height:1px;background:#777"></div></div>
<div class="m" style="left:912.6px;top:449.8px;font-weight:bold;font-size:12.5px;color:#111;letter-spacing:0.3px;-webkit-text-stroke:0.12px #111;">Telemetry -- Output Voltage (V)</div>
<div style="left:910px;top:463.68px;width:438px;height:14.48px;border-bottom:1px solid #dadada;"></div>
<div style="left:1129.4px;top:463.68px;width:1px;height:14.48px;background:#d8d8d8;"></div>
<div class="m" style="left:912.6px;top:464.88px;color:#333;font-size:11.2px;">MFR_VOUT_PEAK_LTC</div>
<div class="m" style="left:1136px;top:464.88px;color:#111;font-weight:bold;font-size:11.2px;letter-spacing:1.05px;">12.2295 V</div>
<div style="left:910px;top:478.16px;width:438px;height:14.48px;border-bottom:1px solid #dadada;"></div>
<div style="left:1129.4px;top:478.16px;width:1px;height:14.48px;background:#d8d8d8;"></div>
<div style="left:910px;top:478.16px;width:219.4px;height:14.48px;background:#2866aa;"></div>
<div class="m" style="left:912.6px;top:479.36px;color:#2a4a80;font-size:11.2px;">READ_VOUT</div>
<div class="m" style="left:1136px;top:479.36px;color:#111;font-weight:bold;font-size:11.2px;letter-spacing:1.05px;">12.2227 V</div>
<div style="left:910px;top:492.64px;width:438px;height:14.48px;border-bottom:1px solid #dadada;"></div>
<div style="left:1129.4px;top:492.64px;width:1px;height:14.48px;background:#d8d8d8;"></div>
<div class="m" style="left:912.6px;top:493.84px;color:#333;font-size:11.2px;">MFR_VOUT_MIN_LTC</div>
<div class="m" style="left:1136px;top:493.84px;color:#111;font-weight:bold;font-size:11.2px;letter-spacing:1.05px;">12.2197 V</div>
<div style="left:894px;top:507.12px;width:454px;height:14.48px;background:linear-gradient(#bcbcbc,#b2b2b2);border-top:1px solid #9a9a9a;"></div>
<div style="left:899px;top:510.72px;width:7.2px;height:7.2px;background:#ececec;border:1px solid #c8c8c8;"><div style="left:1.5px;top:2.5px;width:3px;height:1px;background:#777"></div></div>
<div class="m" style="left:912.6px;top:507.72px;font-weight:bold;font-size:12.5px;color:#111;letter-spacing:0.3px;-webkit-text-stroke:0.12px #111;">Telemetry -- Output Voltage (%)</div>
<div style="left:894px;top:521.6px;width:454px;height:14.48px;background:linear-gradient(#bcbcbc,#b2b2b2);border-top:1px solid #9a9a9a;"></div>
<div style="left:899px;top:525.2px;width:7.2px;height:7.2px;background:#ececec;border:1px solid #c8c8c8;"><div style="left:1.5px;top:2.5px;width:3px;height:1px;background:#777"></div></div>
<div class="m" style="left:912.6px;top:522.2px;font-weight:bold;font-size:12.5px;color:#111;letter-spacing:0.3px;-webkit-text-stroke:0.12px #111;">Telemetry -- DAC</div>
<div style="left:894px;top:536.08px;width:454px;height:14.48px;background:linear-gradient(#bcbcbc,#b2b2b2);border-top:1px solid #9a9a9a;"></div>
<div style="left:899px;top:539.68px;width:7.2px;height:7.2px;background:#ececec;border:1px solid #c8c8c8;"><div style="left:1.5px;top:2.5px;width:3px;height:1px;background:#777"></div></div>
<div class="m" style="left:912.6px;top:536.68px;font-weight:bold;font-size:12.5px;color:#111;letter-spacing:0.3px;-webkit-text-stroke:0.12px #111;">Telemetry -- Output Current</div>
<div style="left:894px;top:550.56px;width:454px;height:14.48px;background:linear-gradient(#bcbcbc,#b2b2b2);border-top:1px solid #9a9a9a;"></div>
<div style="left:899px;top:554.16px;width:7.2px;height:7.2px;background:#ececec;border:1px solid #c8c8c8;"><div style="left:1.5px;top:2.5px;width:3px;height:1px;background:#777"></div></div>
<div class="m" style="left:912.6px;top:551.16px;font-weight:bold;font-size:12.5px;color:#111;letter-spacing:0.3px;-webkit-text-stroke:0.12px #111;">Telemetry -- Temperature</div>
<div style="left:910px;top:565.04px;width:438px;height:14.48px;border-bottom:1px solid #dadada;"></div>
<div style="left:1129.4px;top:565.04px;width:1px;height:14.48px;background:#d8d8d8;"></div>
<div class="m" style="left:912.6px;top:566.24px;color:#333;font-size:11.2px;">MFR_TEMPERATURE_1_PEAK_LTC_P...</div>
<div class="m" style="left:1136px;top:566.24px;color:#111;font-weight:bold;font-size:11.2px;letter-spacing:1.05px;">62.13 &deg;C</div>
<div style="left:910px;top:579.52px;width:438px;height:14.48px;border-bottom:1px solid #dadada;"></div>
<div style="left:1129.4px;top:579.52px;width:1px;height:14.48px;background:#d8d8d8;"></div>
<div class="m" style="left:912.6px;top:580.72px;color:#333;font-size:11.2px;">READ_TEMPERATURE_1_PAGED</div>
<div class="m" style="left:1136px;top:580.72px;color:#111;font-weight:bold;font-size:11.2px;letter-spacing:1.05px;">48.06 &deg;C</div>
<div style="left:910px;top:594px;width:438px;height:14.48px;border-bottom:1px solid #dadada;"></div>
<div style="left:1129.4px;top:594px;width:1px;height:14.48px;background:#d8d8d8;"></div>
<div class="m" style="left:912.6px;top:595.2px;color:#333;font-size:11.2px;">MFR_TEMPERATURE_MIN_LTC_PAGED</div>
<div class="m" style="left:1136px;top:595.2px;color:#111;font-weight:bold;font-size:11.2px;letter-spacing:1.05px;">48.06 &deg;C</div>
<div style="left:910px;top:608.48px;width:438px;height:14.48px;border-bottom:1px solid #dadada;"></div>
<div style="left:1129.4px;top:608.48px;width:1px;height:14.48px;background:#d8d8d8;"></div>
<div class="g" style="left:912.8px;top:608.28px;">G</div>
<div class="m" style="left:932.2px;top:609.68px;color:#333;font-size:11.2px;">READ_TEMPERATURE_2</div>
<div class="m" style="left:1136px;top:609.68px;color:#111;font-weight:bold;font-size:11.2px;letter-spacing:1.05px;">48.06 &deg;C</div>
<div style="left:894px;top:622.96px;width:454px;height:14.48px;background:linear-gradient(#bcbcbc,#b2b2b2);border-top:1px solid #9a9a9a;"></div>
<div style="left:899px;top:626.56px;width:7.2px;height:7.2px;background:#ececec;border:1px solid #c8c8c8;"><div style="left:1.5px;top:2.5px;width:3px;height:1px;background:#777"></div></div>
<div class="m" style="left:912.6px;top:623.56px;font-weight:bold;font-size:12.5px;color:#111;letter-spacing:0.3px;-webkit-text-stroke:0.12px #111;">Telemetry -- Output Power</div>
<div style="left:887px;top:680.8px;width:469px;height:22px;background:linear-gradient(#f4f4f4,#ebebeb);border-top:1px solid #dcdcdc;"></div>
<div style="left:887px;top:702.8px;width:469px;height:1.6px;background:#b4b4b4;"></div>
<svg style="left:890px;top:685.2px" width="198" height="18.6"><polygon points="0,17.6 18,0 196,0 198,2 198,17.6" fill="#fbfbfb" stroke="#a8a8a8" stroke-width="1.2"/></svg>
<div class="t" style="left:1320px;top:685.2px;font-size:9px;line-height:14px;color:#111;">&#9660;</div>
<div class="t" style="left:1334px;top:682.8px;font-size:13.5px;line-height:16px;color:#111;font-weight:bold;">&#10005;</div>
<div style="left:911px;top:689.2px;width:11px;height:9.6px;border:2.4px solid #2a1a1e;border-radius:1px;transform:skewX(-18deg);"></div>
<div class="t" style="left:930px;top:687.2px;color:#333;font-size:11.2px;">Idealized On/Off Waveforms</div>
<div style="left:887px;top:704.4px;width:468px;height:22px;background:#f6f6f6;"></div>
<div style="left:892px;top:726.6px;width:457px;height:264px;background:radial-gradient(ellipse at 50% 60%,#2e2e2e,#1e1e1e 85%);border:1px solid #5a3a2a;"></div>
<div style="left:896.6px;top:731.2px;width:448px;height:71.2px;background:#fcf7c8;border-radius:22px;"></div>
<div class="t" style="left:938.6px;top:734.6px;font-size:47px;font-weight:bold;line-height:56px;color:#111;letter-spacing:4px;-webkit-text-stroke:1.4px #111;">U2:0</div>
<div style="left:892px;top:726.6px;width:457px;height:264px;"><svg width="457" height="264" viewBox="0 0 228.5 132" style="left:0;top:0">
<polyline points="0,112.9 41.4,112.9 114,49.8 129.5,49.8 202,112.9 228.5,112.9" fill="none" stroke="#f4eeb0" stroke-width="2"/>
<polyline points="34.5,130 34.5,122.3 122,122.3 122,129 228.5,129" fill="none" stroke="#a8a8a8" stroke-width="1.3"/>
</svg></div>
<div class="t" style="left:895.6px;top:961.2px;font-size:19px;line-height:22px;color:#e4e4e4;">ON</div>
<div style="left:887px;top:990.6px;width:468px;height:8px;background:#f0f0f0;"></div>
<div style="left:1355px;top:0px;width:3px;height:998px;background:#b4b4b4;"></div>
<div style="left:1358px;top:0px;width:466px;height:998px;background:#f0f0f0;"></div>
<div style="left:1358px;top:28px;width:466px;height:219px;background:#f4f4f6;"></div>
<div style="left:1358px;top:4.4px;width:464px;height:22px;background:linear-gradient(#f4f4f4,#ebebeb);border-top:1px solid #dcdcdc;"></div>
<div style="left:1358px;top:26.4px;width:464px;height:1.6px;background:#b4b4b4;"></div>
<svg style="left:1361px;top:8.8px" width="204" height="18.6"><polygon points="0,17.6 18,0 202,0 204,2 204,17.6" fill="#fbfbfb" stroke="#a8a8a8" stroke-width="1.2"/></svg>
<div class="t" style="left:1786px;top:8.8px;font-size:9px;line-height:14px;color:#111;">&#9660;</div>
<div class="t" style="left:1800px;top:6.4px;font-size:13.5px;line-height:16px;color:#111;font-weight:bold;">&#10005;</div>
<div style="left:1381px;top:12px;width:11px;height:11px;background:linear-gradient(135deg,#f8e070,#d8a030);"></div>
<div class="t" style="left:1387px;top:10.8px;color:#333;font-size:10.8px;">p Dashboard --U0 (7'h61) -LTC29</div>
<div style="left:1430px;top:33px;width:321px;height:203px;background:#ebd8d8;border:1.5px solid #8a6a6a;border-radius:4px;"></div>
<div style="left:1452px;top:62px;width:90px;height:10.8px;background:linear-gradient(#b8b8b8,#a0a0a0);border:1px solid #706060;border-radius:6px;"><div class="m" style="left:0;right:0;top:-2px;text-align:center;font-size:8px;font-weight:bold;color:#1a1a1a;letter-spacing:0.3px">36.8 V / 0.0 A</div></div>
<div style="left:1644px;top:106px;width:96px;height:12px;background:linear-gradient(#b8b8b8,#a0a0a0);border:1px solid #706060;border-radius:6px;"><div class="m" style="left:0;right:0;top:-2px;text-align:center;font-size:8px;font-weight:bold;color:#1a1a1a;letter-spacing:0.3px">12.0 V / 0.0 A</div></div>
<div style="left:1644px;top:132px;width:96px;height:12px;background:linear-gradient(#b8b8b8,#a0a0a0);border:1px solid #706060;border-radius:6px;"><div class="m" style="left:0;right:0;top:-2px;text-align:center;font-size:8px;font-weight:bold;color:#1a1a1a;letter-spacing:0.3px">12.0 V / 0.0 A</div></div>
<div style="left:1459.4px;top:72px;width:1.4px;height:29.4px;background:#6a5050;"></div>
<div style="left:1459.4px;top:100.4px;width:32px;height:1.4px;background:#6a5050;"></div>
<div style="left:1490.4px;top:85.2px;width:151.6px;height:145.4px;background:linear-gradient(#b0b0b0,#a6a6a6);border:1px solid #505050;"></div>
<div style="left:1498.4px;top:89.4px;width:12.4px;height:12.4px;background:radial-gradient(circle at 45% 40%,#7a3030,#3a0c0c);border-radius:50%;"></div>
<div style="left:1519.4px;top:88.2px;width:7.6px;height:7.6px;background:radial-gradient(circle at 45% 40%,#7a3030,#3a0c0c);border-radius:50%;"></div>
<div style="left:1535.8px;top:88.8px;width:7.6px;height:7.6px;background:radial-gradient(circle at 45% 40%,#7a3030,#3a0c0c);border-radius:50%;"></div>
<div style="left:1504px;top:79px;width:1.2px;height:6.4px;background:#6a5050;"></div>
<div style="left:1522.6px;top:79px;width:1.2px;height:6.4px;background:#6a5050;"></div>
<div style="left:1539px;top:79px;width:1.2px;height:6.4px;background:#6a5050;"></div>
<div style="left:1557.2px;top:88px;width:13.6px;height:13.6px;background:radial-gradient(circle,#2a9a2a 35%,#68c868 55%,#b0d8b0 80%,rgba(176,216,176,0) 100%);border-radius:50%;"></div>
<div style="left:1588.4px;top:105.6px;width:11.2px;height:11.2px;background:radial-gradient(circle,#2a9a2a 35%,#68c868 55%,#b0d8b0 80%,rgba(176,216,176,0) 100%);border-radius:50%;"></div>
<div style="left:1588.4px;top:132.4px;width:11.2px;height:11.2px;background:radial-gradient(circle,#2a9a2a 35%,#68c868 55%,#b0d8b0 80%,rgba(176,216,176,0) 100%);border-radius:50%;"></div>
<div style="left:1491.8px;top:158px;width:10.4px;height:10.4px;background:radial-gradient(circle,#2a9a2a 35%,#68c868 55%,#b0d8b0 80%,rgba(176,216,176,0) 100%);border-radius:50%;"></div>
<div style="left:1491.8px;top:174.8px;width:10.4px;height:10.4px;background:radial-gradient(circle,#2a9a2a 35%,#68c868 55%,#b0d8b0 80%,rgba(176,216,176,0) 100%);border-radius:50%;"></div>
<div style="left:1483px;top:162.6px;width:8px;height:1.4px;background:#7a3030;"></div>
<div style="left:1483px;top:179.4px;width:8px;height:1.4px;background:#c08050;"></div>
<div style="left:1631px;top:178.2px;width:8.4px;height:8.4px;background:radial-gradient(circle at 40% 40%,#6a6ae0,#2a2aa8);border-radius:50%;"></div>
<div style="left:1639.4px;top:181.8px;width:8px;height:1.2px;background:#9090b0;"></div>
<div class="t" style="left:1647px;top:176.4px;font-size:6.5px;line-height:8px;color:#6a5a50;">(*)</div>
<div style="left:1631px;top:192.2px;width:8.4px;height:8.4px;background:radial-gradient(circle at 40% 40%,#6a6ae0,#2a2aa8);border-radius:50%;"></div>
<div style="left:1639.4px;top:195.8px;width:8px;height:1.2px;background:#9090b0;"></div>
<div class="t" style="left:1647px;top:190.4px;font-size:6.5px;line-height:8px;color:#6a5a50;">(*)</div>
<div class="t" style="left:1588.6px;top:88.4px;font-size:10px;font-weight:bold;color:#111;letter-spacing:0.3px;">VOENs</div>
<div class="t" style="left:1605px;top:176px;font-size:8.5px;line-height:10px;font-weight:bold;color:#111;">PG0</div>
<div class="t" style="left:1605px;top:190px;font-size:8.5px;line-height:10px;font-weight:bold;color:#111;">PG1</div>
<div class="t" style="left:1603.6px;top:106.8px;font-size:7px;line-height:8px;color:#f0f0f0;letter-spacing:0.6px;">VOUT0</div>
<div class="t" style="left:1603.6px;top:133.6px;font-size:7px;line-height:8px;color:#f0f0f0;letter-spacing:0.6px;">VOUT1</div>
<div class="t" style="left:1506px;top:158.8px;font-size:7px;line-height:8px;color:#f0f0f0;letter-spacing:0.5px;">FAULTB00</div>
<div class="t" style="left:1506px;top:175.6px;font-size:7px;line-height:8px;color:#f0f0f0;letter-spacing:0.5px;">FAULTB01</div>
<div class="t" style="left:1498.6px;top:159px;font-size:11.5px;line-height:11.5px;letter-spacing:0.6px;color:#f2f2f2;transform-origin:0 0;transform:rotate(-90deg);">ALERT#</div>
<div class="t" style="left:1518.6px;top:139px;font-size:8px;line-height:8px;letter-spacing:0.5px;color:#f2f2f2;transform-origin:0 0;transform:rotate(-90deg);">FAULT#</div>
<div class="t" style="left:1535.2px;top:139px;font-size:8px;line-height:8px;letter-spacing:0.5px;color:#f2f2f2;transform-origin:0 0;transform:rotate(-90deg);">SHARE</div>
<div class="t" style="left:1558.6px;top:149px;font-size:10px;line-height:10px;letter-spacing:0.6px;color:#f2f2f2;transform-origin:0 0;transform:rotate(-90deg);">PGOOD</div>
<div style="left:1534px;top:178px;width:58px;height:54px;background:radial-gradient(ellipse at 50% 50%,#ffffff 0,#f4f4f4 62%,#2e2e2e 66%,#3a3a3a 72%,#d4d4d4 76%,rgba(220,220,220,0) 82%);border-radius:50%;"><div style="left:10px;top:14px;width:38px;height:9px;border-top:2.5px solid #555;border-radius:50% 50% 0 0"></div><div class="t" style="left:11px;top:21px;font-size:9px;line-height:10px;font-weight:bold;font-style:italic;color:#111;letter-spacing:-0.3px">LTpower</div><div style="left:19px;top:32px;width:20px;height:3px;background:#c03030;border-radius:1px"></div></div>
<div style="left:1358px;top:247px;width:466px;height:2px;background:#c8c8c8;"></div>
<div style="left:1358px;top:247.2px;width:464px;height:22px;background:linear-gradient(#f4f4f4,#ebebeb);border-top:1px solid #dcdcdc;"></div>
<div style="left:1358px;top:269.2px;width:464px;height:1.6px;background:#b4b4b4;"></div>
<svg style="left:1361px;top:251.6px" width="152.4" height="18.6"><polygon points="0,17.6 18,0 150.4,0 152.4,2 152.4,17.6" fill="#fbfbfb" stroke="#a8a8a8" stroke-width="1.2"/></svg>
<div class="t" style="left:1786px;top:251.6px;font-size:9px;line-height:14px;color:#111;">&#9660;</div>
<div class="t" style="left:1800px;top:249.2px;font-size:13.5px;line-height:16px;color:#111;font-weight:bold;">&#10005;</div>
<div style="left:1382px;top:256.6px;width:11px;height:10px;background:#dcdcdc;border:1px solid #c8c8c8;"></div>
<div class="t" style="left:1397.6px;top:253.4px;color:#333;font-size:11.2px;">[3 rails] READ_VOUT</div>
<div style="left:1358px;top:270.8px;width:466px;height:230px;background:#f6f6f6;"></div>
<div style="left:1362px;top:274.6px;width:458px;height:213px;background:#fff;border:1px solid #b0b0b0;"></div>
<div style="left:1363px;top:275.6px;width:18px;height:57.6px;background:linear-gradient(90deg,#aaaaaa 0,#aaaaaa 12%,#bdbdbd 25%,#bababa);"></div>
<div style="left:1363px;top:275.6px;width:453px;height:14.4px;background:linear-gradient(#bcbcbc,#b2b2b2);border-top:1px solid #9a9a9a;"></div>
<div style="left:1368px;top:279.2px;width:7.2px;height:7.2px;background:#ececec;border:1px solid #c8c8c8;"><div style="left:1.5px;top:2.5px;width:3px;height:1px;background:#777"></div></div>
<div class="m" style="left:1383.6px;top:276.2px;font-weight:bold;font-size:12.5px;color:#111;letter-spacing:0.3px;-webkit-text-stroke:0.12px #111;">READ_VOUT (All Pages in System)</div>
<div style="left:1381px;top:290px;width:435px;height:14.4px;border-bottom:1px solid #dadada;"></div>
<div style="left:1598.6px;top:290px;width:1px;height:14.4px;background:#d8d8d8;"></div>
<div class="m" style="left:1383.6px;top:291.2px;color:#333;font-size:11.1px;">U2:0 - LTC2971</div>
<div class="m" style="left:1605px;top:291.2px;color:#111;font-weight:bold;font-size:11.1px;letter-spacing:1.0px;">12.2227 V</div>
<div style="left:1381px;top:304.4px;width:435px;height:14.4px;border-bottom:1px solid #dadada;"></div>
<div style="left:1598.6px;top:304.4px;width:1px;height:14.4px;background:#d8d8d8;"></div>
<div class="m" style="left:1383.6px;top:305.6px;color:#333;font-size:11.1px;">U2:1</div>
<div class="m" style="left:1605px;top:305.6px;color:#111;font-weight:bold;font-size:11.1px;letter-spacing:1.0px;">12.1719 V</div>
<div style="left:1381px;top:318.8px;width:435px;height:14.4px;border-bottom:1px solid #dadada;"></div>
<div style="left:1598.6px;top:318.8px;width:1px;height:14.4px;background:#d8d8d8;"></div>
<div class="m" style="left:1383.6px;top:320px;color:#333;font-size:11.1px;">U0:0 - LTC4287</div>
<div class="m" style="left:1605px;top:320px;color:#333;font-size:11.1px;">N/A</div>
<div style="left:1358px;top:500px;width:464px;height:22px;background:linear-gradient(#f4f4f4,#ebebeb);border-top:1px solid #dcdcdc;"></div>
<div style="left:1358px;top:522px;width:464px;height:1.6px;background:#b4b4b4;"></div>
<svg style="left:1361px;top:504.4px" width="123.6" height="18.6"><polygon points="0,17.6 18,0 121.6,0 123.6,2 123.6,17.6" fill="#fbfbfb" stroke="#a8a8a8" stroke-width="1.2"/></svg>
<div class="t" style="left:1786px;top:504.4px;font-size:9px;line-height:14px;color:#111;">&#9660;</div>
<div class="t" style="left:1800px;top:502px;font-size:13.5px;line-height:16px;color:#111;font-weight:bold;">&#10005;</div>
<div style="left:1382px;top:508.6px;width:13px;height:9px;background:#333;border:1px solid #777;"></div>
<div class="t" style="left:1402.6px;top:505px;color:#333;font-size:11.2px;">Telemetry Plot</div>
<div style="left:1358px;top:523.6px;width:466px;height:24px;background:#fafafa;"></div>
<div style="left:1372px;top:527.6px;width:13px;height:13px;background:#d04848;clip-path:polygon(50% 0,100% 48%,86% 48%,86% 100%,14% 100%,14% 48%,0 48%);"><div style="left:4px;top:7px;width:5px;height:6px;background:#40a0a0"></div></div>
<div style="left:1395px;top:529.2px;width:10.4px;height:10.4px;background:#e02828;"></div>
<div class="t" style="left:1415.6px;top:527.2px;font-size:11.5px;color:#222;">Plot... <span style="font-size:8px">&#9660;</span>&nbsp; 4.9Hz</div>
<div style="left:1358px;top:547.6px;width:462px;height:443.6px;background:#282b80;"></div>
<div style="left:1368px;top:563px;width:80px;height:39px;background:#3c3c40;border:1px solid #9898b8;"></div>
<div style="left:1373px;top:570px;width:18px;height:3.6px;background:#f4eea0;"></div>
<div class="t" style="left:1397.6px;top:563.2px;font-size:10.5px;line-height:12px;color:#e8e8f0;">&gt;&gt; U2:0</div>
<div class="t" style="left:1400.6px;top:579.6px;font-size:10.5px;line-height:12px;color:#e8e8f0;">U2:1</div>
<div class="t" style="left:1594px;top:554.6px;font-size:13px;line-height:14px;color:#d0d0f0;">READ_VOUT</div>
<div style="left:1461px;top:577px;width:349px;height:390.6px;background:#474749;border-top:1px solid #c0c0c0;border-left:1px solid #9090a0;border-bottom:1px solid #c0c0c0;border-right:1px solid #9090a0;"></div>
<div style="left:1461px;top:577px;width:349px;height:390.6px;"><div style="left:0;right:0;top:9.2px;height:1px;background:#5a5a5c"></div><div style="left:0;right:0;top:35.4px;height:1px;background:#767676"></div><div style="left:0;right:0;top:61.6px;height:1px;background:#767676"></div><div style="left:0;right:0;top:87.8px;height:1px;background:#767676"></div><div style="left:0;right:0;top:114px;height:1px;background:#767676"></div><div style="left:0;right:0;top:140.2px;height:1px;background:#767676"></div><div style="left:0;right:0;top:166.4px;height:1px;background:#767676"></div><div style="left:0;right:0;top:192.6px;height:1px;background:#767676"></div><div style="left:0;right:0;top:218.8px;height:1px;background:#767676"></div><div style="left:0;right:0;top:245px;height:1px;background:#767676"></div><div style="left:0;right:0;top:271.2px;height:1px;background:#767676"></div><div style="left:0;right:0;top:297.4px;height:1px;background:#767676"></div><div style="left:0;right:0;top:323.6px;height:1px;background:#767676"></div><div style="left:0;right:0;top:349.8px;height:1px;background:#767676"></div><div style="left:0;right:0;top:376px;height:1px;background:#767676"></div><div style="left:76.6px;top:0;width:1px;height:5px;background:#c0c0c0"></div><div style="left:76.6px;bottom:0;width:1px;height:5px;background:#c0c0c0"></div><div style="left:164px;top:0;width:1px;height:5px;background:#c0c0c0"></div><div style="left:164px;bottom:0;width:1px;height:5px;background:#c0c0c0"></div><div style="left:253px;top:0;width:1px;height:5px;background:#c0c0c0"></div><div style="left:253px;bottom:0;width:1px;height:5px;background:#c0c0c0"></div><div style="left:343px;top:0;width:1px;height:5px;background:#c0c0c0"></div><div style="left:343px;bottom:0;width:1px;height:5px;background:#c0c0c0"></div></div>
<div class="t" style="left:0;width:1455px;top:605.6px;text-align:right;font-size:9.2px;color:#dcdcf8">12.26</div>
<div class="t" style="left:0;width:1455px;top:657.4px;text-align:right;font-size:9.2px;color:#dcdcf8">12.24</div>
<div class="t" style="left:0;width:1455px;top:709.6px;text-align:right;font-size:9.2px;color:#dcdcf8">12.22</div>
<div class="t" style="left:0;width:1455px;top:761.8px;text-align:right;font-size:9.2px;color:#dcdcf8">12.2</div>
<div class="t" style="left:0;width:1455px;top:814.2px;text-align:right;font-size:9.2px;color:#dcdcf8">12.18</div>
<div class="t" style="left:0;width:1455px;top:866.6px;text-align:right;font-size:9.2px;color:#dcdcf8">12.16</div>
<div class="t" style="left:0;width:1455px;top:919px;text-align:right;font-size:9.2px;color:#dcdcf8">12.14</div>
<div class="t" style="left:1517.6px;width:40px;top:969.2px;text-align:center;font-size:9px;color:#dcdcf8">400</div>
<div class="t" style="left:1605px;width:40px;top:969.2px;text-align:center;font-size:9px;color:#dcdcf8">405</div>
<div class="t" style="left:1694px;width:40px;top:969.2px;text-align:center;font-size:9px;color:#dcdcf8">410</div>
<div class="t" style="left:1784px;width:40px;top:969.2px;text-align:center;font-size:9px;color:#dcdcf8">415</div>
<div style="left:1461px;top:577px;width:349px;height:390.6px;"><svg width="349" height="391" viewBox="0 0 174.5 195.3" style="left:0;top:0">
<polyline points="0,131.42 1,131.14 2,131.94 3,131.02 4,131.76 5,131.49 6,130.99 7,131.71 8,130.96 9,131.59 10,131.01 11,131.05 12,131.58 13,132.22 14,131.10 15,131.26 16,131.90 17,132.42 18,131.82 19,131.53 20,132.46 21,130.97 22,132.27 23,131.36 24,131.13 25,131.09 26,131.39 27,132.21 28,131.19 29,131.83 30,131.92 31,131.50 32,131.78 33,131.00 34,131.00 35,131.23 36,131.99 37,131.58 38,131.40 39,131.84 40,131.63 41,131.38 42,132.17 43,132.02 44,131.29 45,131.82 46,131.74 47,132.30 48,132.07 49,131.36 50,132.47 51,131.09 52,131.57 53,132.11 54,131.14 55,131.68 56,130.96 57,131.97 58,132.12 59,131.82 60,132.30 61,131.40 62,132.01 63,131.85 64,131.83 65,131.63 66,132.24 67,132.41 68,131.66 69,131.96 70,131.00 71,132.02 72,131.94 73,132.49 74,132.22 75,131.36 76,131.52 77,131.97 78,130.94 79,131.64 80,131.17 81,131.09 82,130.99 83,132.13 84,131.11 85,131.30 86,131.53 87,132.29 88,131.03 89,131.62 90,131.78 91,132.31 92,132.21 93,132.28 94,131.35 95,131.56 96,131.47 97,132.31 98,132.43 99,131.14 100,131.18 101,131.27 102,131.27 103,131.68 104,131.84 105,131.32 106,130.91 107,131.57 108,131.49 109,131.81 110,132.42 111,132.00 112,131.72 113,131.89 114,131.98 115,130.99 116,132.34 117,132.15 118,132.30 119,132.18 120,131.53 121,131.54 122,131.07 123,131.91 124,131.00 125,131.01 126,131.23 127,131.16 128,131.44 129,130.98 130,130.90 131,131.14 132,131.06 133,131.48 134,130.94 135,132.30 136,131.88 137,131.14 138,131.30 139,131.46 140,131.48 141,131.10 142,132.26 143,132.49 144,131.65 145,131.67 146,131.04 147,131.06 148,131.45 149,131.32 150,132.23 151,131.16 152,130.94 153,132.42 154,131.75 155,131.13 156,131.77 157,130.94 158,131.74 159,132.47 160,132.28 161,132.01 162,131.32 163,131.49 164,131.17 165,132.14 166,131.75 167,132.15 168,131.43 169,131.26 170,132.20 171,132.48 172,132.26 173,132.19 174,132.21" fill="none" stroke="#23273a" stroke-width="2.6"/>
<polyline points="0,133.10 3,133.10 6,132.70 9,130.90 12,130.10 15,130.10 18,130.90 21,132.70 24,130.90 27,133.10 30,130.90 33,132.70 36,130.90 39,130.90 42,130.10 45,133.10 48,130.10 51,133.10 54,132.70 57,133.10 60,130.90 63,133.10 66,132.70 69,130.10 72,132.70 75,130.90 78,130.10 81,130.10 84,132.70 87,133.10 90,132.70 93,133.10 96,132.70 99,130.90 102,130.10 105,132.70 108,132.70 111,132.70 114,130.10 117,133.10 120,133.10 123,133.10 126,130.10 129,133.10 132,132.70 135,133.10 138,132.70 141,130.90 144,133.10 147,133.10 150,130.10 153,130.10 156,130.10 159,133.10 162,132.70 165,133.10 168,133.10 171,130.10 174,130.90" fill="none" stroke="#6a7090" stroke-width="0.5"/>
<polyline points="1.46,66.21 3.91,64.05 7.34,65.23 11.26,64.25 14.21,67.19 16.66,69.64 19.11,68.17 20.58,66.21 22.05,69.15 24.01,65.72 25.48,68.66 27.93,65.23 29.89,63.26 31.85,66.21 33.81,62.28 36.75,64.25 38.72,65.23 48.52,65.23 51.46,67.68 54.40,66.21 57.34,67.19 60.28,63.26 63.23,64.74 66.17,61.79 68.13,63.26 69.60,67.19 72.05,66.21 74.01,66.70 76.95,64.25 78.91,66.70 80.87,64.74 83.81,66.21 84.50,64.96 88.64,66.51 93.82,64.96 100.03,63.40 103.13,65.99 110.38,65.99 115.56,67.55 120.73,64.44 123.84,65.48 127.98,64.44 131.08,68.58 134.19,69.10 137.30,66.51 140.40,64.44 144.54,65.99 149.72,67.03 154.89,65.99 158.00,63.40 161.10,65.48 164.21,63.92 167.32,65.48 170.42,66.51 174.04,64.96" fill="none" stroke="#111" stroke-width="2.6" stroke-opacity="0.35" transform="translate(0.4,0.6)"/>
<polyline points="1.46,66.21 3.91,64.05 7.34,65.23 11.26,64.25 14.21,67.19 16.66,69.64 19.11,68.17 20.58,66.21 22.05,69.15 24.01,65.72 25.48,68.66 27.93,65.23 29.89,63.26 31.85,66.21 33.81,62.28 36.75,64.25 38.72,65.23 48.52,65.23 51.46,67.68 54.40,66.21 57.34,67.19 60.28,63.26 63.23,64.74 66.17,61.79 68.13,63.26 69.60,67.19 72.05,66.21 74.01,66.70 76.95,64.25 78.91,66.70 80.87,64.74 83.81,66.21 84.50,64.96 88.64,66.51 93.82,64.96 100.03,63.40 103.13,65.99 110.38,65.99 115.56,67.55 120.73,64.44 123.84,65.48 127.98,64.44 131.08,68.58 134.19,69.10 137.30,66.51 140.40,64.44 144.54,65.99 149.72,67.03 154.89,65.99 158.00,63.40 161.10,65.48 164.21,63.92 167.32,65.48 170.42,66.51 174.04,64.96" fill="none" stroke="#f6f2b4" stroke-width="2" stroke-linejoin="round"/>
</svg></div>
<div style="left:1819.6px;top:524px;width:4.4px;height:474px;background:#fbfbfb;"></div>
<div style="left:1358px;top:991.2px;width:466px;height:8px;background:#fafafa;"></div>
<div style="left:1824px;top:0px;width:12px;height:998px;background:#f4f4f4;border-left:1.5px solid #a8a8a8;"></div>

</div></body></html>
